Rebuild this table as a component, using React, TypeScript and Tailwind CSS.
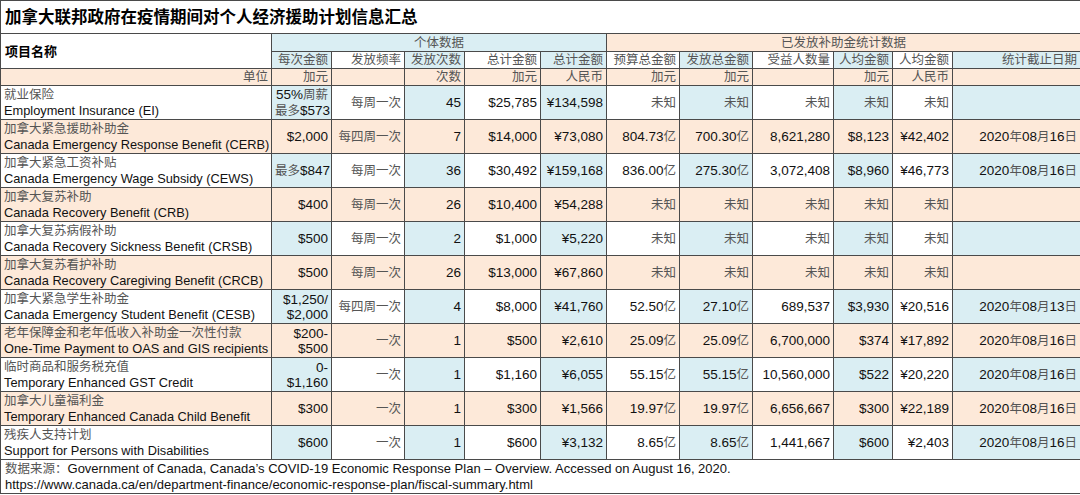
import type { ReactNode } from 'react';

const BLUE = 'bg-[#daeef3]';
const PEACH = 'bg-[#fde9d9]';

// split a string into CJK / latin runs so the Chinese parts get the lighter look
const CJK = /([\u3000-\u303f\u4e00-\u9fff\uff00-\uffef]+)/g;
function T({ s }: { s: string }) {
  return (
    <>
      {s.split(CJK).map((p, i) =>
        i % 2 === 1 ? (
          <span key={i} className="text-[#555] text-[12.5px]">
            {p}
          </span>
        ) : (
          p
        )
      )}
    </>
  );
}

interface Program {
  zh: string;
  en: string;
  amt: string[];
  freq: string;
  n: string;
  cad: string;
  rmb: string;
  budget: string;
  paid: string;
  people: string;
  avgCad: string;
  avgRmb: string;
  date: string;
}

const U = '未知';

const programs: Program[] = [
  { zh: '就业保险', en: 'Employment Insurance (EI)', amt: ['55%周薪', '最多$573'], freq: '每周一次', n: '45', cad: '$25,785', rmb: '¥134,598', budget: U, paid: U, people: U, avgCad: U, avgRmb: U, date: '' },
  { zh: '加拿大紧急援助补助金', en: 'Canada Emergency Response Benefit (CERB)', amt: ['$2,000'], freq: '每四周一次', n: '7', cad: '$14,000', rmb: '¥73,080', budget: '804.73亿', paid: '700.30亿', people: '8,621,280', avgCad: '$8,123', avgRmb: '¥42,402', date: '2020年08月16日' },
  { zh: '加拿大紧急工资补贴', en: 'Canada Emergency Wage Subsidy (CEWS)', amt: ['最多$847'], freq: '每周一次', n: '36', cad: '$30,492', rmb: '¥159,168', budget: '836.00亿', paid: '275.30亿', people: '3,072,408', avgCad: '$8,960', avgRmb: '¥46,773', date: '2020年08月16日' },
  { zh: '加拿大复苏补助', en: 'Canada Recovery Benefit (CRB)', amt: ['$400'], freq: '每周一次', n: '26', cad: '$10,400', rmb: '¥54,288', budget: U, paid: U, people: U, avgCad: U, avgRmb: U, date: '' },
  { zh: '加拿大复苏病假补助', en: 'Canada Recovery Sickness Benefit (CRSB)', amt: ['$500'], freq: '每周一次', n: '2', cad: '$1,000', rmb: '¥5,220', budget: U, paid: U, people: U, avgCad: U, avgRmb: U, date: '' },
  { zh: '加拿大复苏看护补助', en: 'Canada Recovery Caregiving Benefit (CRCB)', amt: ['$500'], freq: '每周一次', n: '26', cad: '$13,000', rmb: '¥67,860', budget: U, paid: U, people: U, avgCad: U, avgRmb: U, date: '' },
  { zh: '加拿大紧急学生补助金', en: 'Canada Emergency Student Benefit (CESB)', amt: ['$1,250/', '$2,000'], freq: '每四周一次', n: '4', cad: '$8,000', rmb: '¥41,760', budget: '52.50亿', paid: '27.10亿', people: '689,537', avgCad: '$3,930', avgRmb: '¥20,516', date: '2020年08月13日' },
  { zh: '老年保障金和老年低收入补助金一次性付款', en: 'One-Time Payment to OAS and GIS recipients', amt: ['$200-', '$500'], freq: '一次', n: '1', cad: '$500', rmb: '¥2,610', budget: '25.09亿', paid: '25.09亿', people: '6,700,000', avgCad: '$374', avgRmb: '¥17,892', date: '2020年08月16日' },
  { zh: '临时商品和服务税充值', en: 'Temporary Enhanced GST Credit', amt: ['0-', '$1,160'], freq: '一次', n: '1', cad: '$1,160', rmb: '¥6,055', budget: '55.15亿', paid: '55.15亿', people: '10,560,000', avgCad: '$522', avgRmb: '¥20,220', date: '2020年08月16日' },
  { zh: '加拿大儿童福利金', en: 'Temporary Enhanced Canada Child Benefit', amt: ['$300'], freq: '一次', n: '1', cad: '$300', rmb: '¥1,566', budget: '19.97亿', paid: '19.97亿', people: '6,656,667', avgCad: '$300', avgRmb: '¥22,189', date: '2020年08月16日' },
  { zh: '残疾人支持计划', en: 'Support for Persons with Disabilities', amt: ['$600'], freq: '一次', n: '1', cad: '$600', rmb: '¥3,132', budget: '8.65亿', paid: '8.65亿', people: '1,441,667', avgCad: '$600', avgRmb: '¥2,403', date: '2020年08月16日' },
];

const colWidths = [271, 60, 73, 60, 76, 66, 73, 73, 81, 59, 60, 128];

const headers = ['每次金额', '发放频率', '发放次数', '总计金额', '总计金额', '预算总金额', '发放总金额', '受益人数量', '人均金额', '人均金额', '统计截止日期'];
const units = ['加元', '', '次数', '加元', '人民币', '加元', '加元', '', '加元', '人民币', ''];

function Cell({ bg, children, className = '', colSpan }: { bg: string; children?: ReactNode; className?: string; colSpan?: number }) {
  return (
    <td
      colSpan={colSpan}
      className={`border border-[#4a4a4a] px-[3px] py-0 align-middle whitespace-nowrap text-[13.5px] leading-[15px] ${bg} ${className}`}
    >
      {children}
    </td>
  );
}

export default function App() {
  return (
    <div className="w-[1080px] h-[495px] overflow-hidden bg-white font-['Liberation_Sans','Noto_Sans_CJK_SC',sans-serif] text-[#111]">
      <table className="w-[1080px] table-fixed border-collapse">
        <colgroup>
          {colWidths.map((w, i) => (
            <col key={i} style={{ width: w }} />
          ))}
        </colgroup>
        <tbody>
          {/* Title */}
          <tr className="h-[33px]">
            <td colSpan={12} className="border border-[#4a4a4a] px-[4px] align-middle whitespace-nowrap">
              <span className="text-[16.5px] font-bold text-black">加拿大联邦政府在疫情期间对个人经济援助计划信息汇总</span>
            </td>
          </tr>

          {/* Header groups */}
          <tr className="h-[18px]">
            <td rowSpan={2} className="border border-[#4a4a4a] bg-white px-[4px] align-middle">
              <span className="text-[13px] font-bold text-black">项目名称</span>
            </td>
            <Cell bg={BLUE} colSpan={5} className="text-center">
              <T s="个体数据" />
            </Cell>
            <Cell bg={PEACH} colSpan={6} className="text-center">
              <T s="已发放补助金统计数据" />
            </Cell>
          </tr>
          <tr className="h-[17px]">
            {headers.map((h, i) => (
              <Cell key={i} bg={i % 2 === 0 ? BLUE : 'bg-white'} className="text-right">
                <T s={h} />
              </Cell>
            ))}
          </tr>

          {/* Units */}
          <tr className="h-[17px]">
            <Cell bg={PEACH} className="text-right">
              <T s="单位" />
            </Cell>
            {units.map((u, i) => (
              <Cell key={i} bg={PEACH} className="text-right">
                <T s={u} />
              </Cell>
            ))}
          </tr>

          {programs.map((p, r) => {
            const peach = r % 2 === 1;
            const bg = (c: number) => (peach ? PEACH : c % 2 === 1 ? BLUE : 'bg-white');
            const values = [p.freq, p.n, p.cad, p.rmb, p.budget, p.paid, p.people, p.avgCad, p.avgRmb, p.date];
            return (
              <tr key={r} className="h-[34px]">
                <td className={`border border-[#4a4a4a] px-[3px] pb-[1px] align-bottom whitespace-nowrap text-[12.8px] leading-[15px] ${bg(0)}`}>
                  <div>
                    <T s={p.zh} />
                  </div>
                  <div>{p.en}</div>
                </td>
                <Cell bg={bg(1)} className="text-right">
                  {p.amt.map((a, i) => (
                    <div key={i}>
                      <T s={a} />
                    </div>
                  ))}
                </Cell>
                {values.map((v, i) => (
                  <Cell key={i} bg={bg(i + 2)} className="text-right">
                    <T s={v} />
                  </Cell>
                ))}
              </tr>
            );
          })}

          {/* Source */}
          <tr className="h-[34px]">
            <td colSpan={12} className="border border-[#4a4a4a] px-[4px] align-middle whitespace-nowrap text-[13px] leading-[16px]">
              <div>
                <T s="数据来源：Government of Canada, Canada’s COVID-19 Economic Response Plan – Overview. Accessed on August 16, 2020." />
              </div>
              <div>https://www.canada.ca/en/department-finance/economic-response-plan/fiscal-summary.html</div>
            </td>
          </tr>
        </tbody>
      </table>
    </div>
  );
}
